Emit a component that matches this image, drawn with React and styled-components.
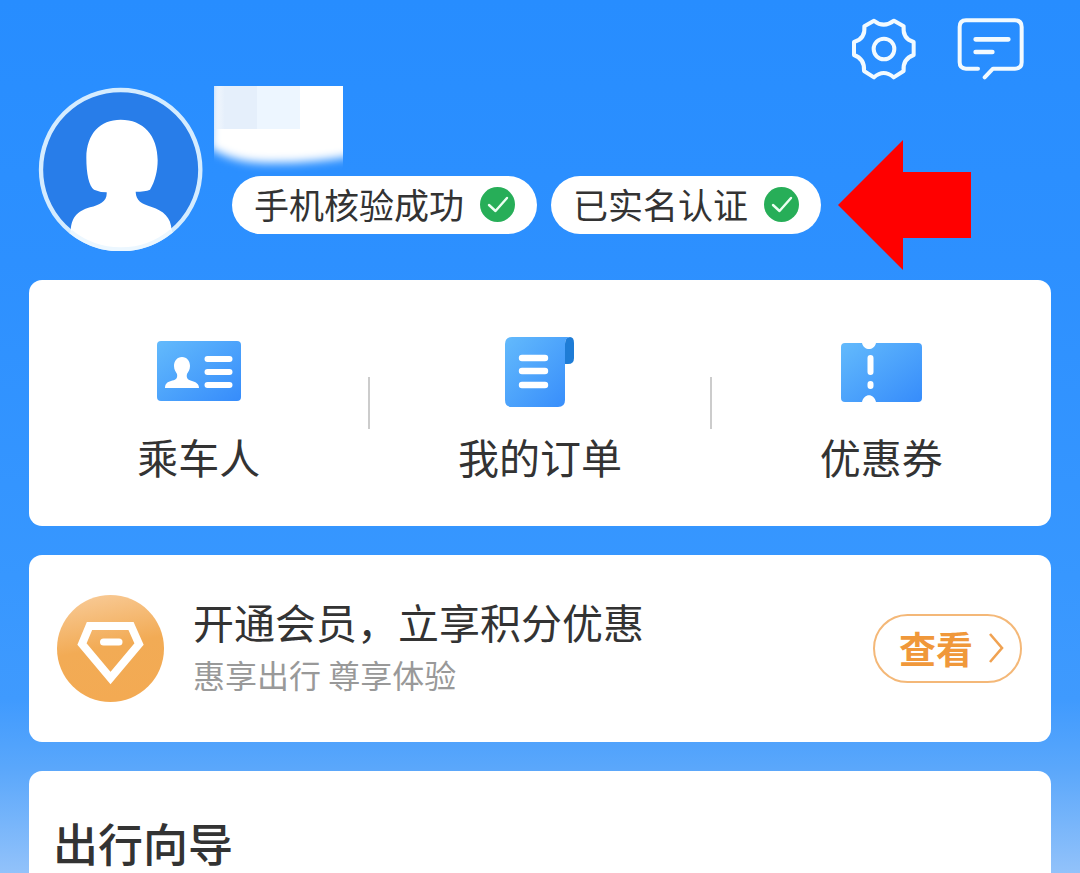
import React from "react";
import styled, { createGlobalStyle } from "styled-components";

const GlobalStyle = createGlobalStyle`
  * { box-sizing: border-box; }
  body {
    margin: 0;
    font-family: "Noto Sans CJK SC", "Noto Sans", sans-serif;
    color: #333;
  }
  button { font: inherit; color: inherit; background: none; border: 0; padding: 0; cursor: pointer; }
  h1, h2, p { margin: 0; font-weight: 400; }
  svg { display: block; }
`;

const Page = styled.div`
  min-height: 100vh;
  display: flex;
  flex-direction: column;
  padding: 0 29px;
  overflow-x: hidden;
  background: linear-gradient(#278dff 0%, #2d90ff 30%, #3797ff 66%, #3f9afe 80%, #5aa7fb 88%, #92c2fa 100%);
`;

const TopBar = styled.nav`
  display: flex;
  justify-content: flex-end;
  align-items: flex-start;
  gap: 41px;
  padding: 18px 27px 0 0;
  height: 86px;
`;

const IconButton = styled.button`
  display: block;
`;

const Profile = styled.section`
  display: flex;
  align-items: flex-start;
  gap: 11px;
  height: 194px;
  padding-left: 9px;
`;

const Identity = styled.div`
  display: flex;
  flex-direction: column;
`;

const Badges = styled.div`
  position: relative;
  display: flex;
  gap: 14px;
  margin-left: 18px;
`;

const Badge = styled.button`
  display: flex;
  align-items: center;
  gap: 16px;
  height: 58px;
  padding: 0 22px 2px;
  border-radius: 29px;
  background: #fff;
  font-size: 35px;
  line-height: 56px;
  white-space: nowrap;
`;

const Pointer = styled.svg`
  position: absolute;
  left: 100%;
  top: 50%;
  margin-left: 17px;
  transform: translateY(-50%);
`;

const Card = styled.section`
  background: #fff;
  border-radius: 13px;
`;

const Shortcuts = styled(Card)`
  display: grid;
  grid-template-columns: 1fr auto 1fr auto 1fr;
  align-items: center;
  margin-bottom: 29px;
`;

const Divider = styled.span`
  width: 2px;
  height: 52px;
  background: #ccc;
`;

const Shortcut = styled.button`
  display: flex;
  flex-direction: column;
  align-items: center;
  gap: 24px;
  padding: 56px 0 46px;
  font-size: 41px;
  line-height: 48px;
`;

const Member = styled(Card)`
  display: flex;
  align-items: center;
  gap: 29px;
  padding: 40px 29px 40px 28px;
  margin-bottom: 29px;
`;

const MemberText = styled.div`
  flex: 1;
  white-space: nowrap;
`;

const MemberTitle = styled.h2`
  font-size: 41px;
  line-height: 52px;
`;

const MemberNote = styled.p`
  font-size: 32px;
  line-height: 55px;
  color: #999;
`;

const ViewButton = styled.button`
  display: flex;
  align-items: center;
  justify-content: center;
  gap: 15px;
  width: 149px;
  height: 69px;
  border: 2px solid #f4b878;
  border-radius: 35px;
  padding: 0 0 2px 8px;
  color: #f0983a;
  font-size: 37px;
  font-weight: 700;
`;

const Guide = styled(Card)`
  flex: 1;
  border-radius: 13px 13px 0 0;
  padding: 48px 24px 0;
`;

const GuideTitle = styled.h2`
  font-size: 45px;
  line-height: 48px;
  font-weight: 500;
`;

const Gear = () => (
  <svg width="64" height="62" viewBox="35 55 192 186" fill="none" stroke="#f2faff" strokeWidth="12" strokeLinejoin="round">
    <path d="M101 63Q130 87 161 63L190 80Q186 118 220 127V166Q186 178 190 214L160 233Q130 207 101 233L71 214Q74 178 41 166V127Q76 118 72 80Z" />
    <circle cx="131" cy="148" r="31" />
  </svg>
);

const Message = () => (
  <svg width="67" height="62" viewBox="351 55 201 186" fill="none" stroke="#f2faff" strokeWidth="12" strokeLinecap="round">
    <path d="M414 207H378Q359 207 359 188V82Q359 62 378 62H525Q545 62 545 82V188Q545 207 525 207H459L434 233" strokeLinejoin="round" />
    <path d="M407 119H505M407 157H457" strokeWidth="14" />
  </svg>
);

const Avatar = () => (
  <svg width="165" height="165" viewBox="54 47 495 495" role="img" aria-label="头像">
    <defs>
      <clipPath id="face"><circle cx="302" cy="298" r="242" /></clipPath>
    </defs>
    <circle cx="302" cy="298" r="240" fill="#287de9" />
    <circle cx="302" cy="298" r="239" fill="none" stroke="#d5ecff" strokeWidth="13" />
    <path clipPath="url(#face)" fill="#fff" d="M302 148C240 148 200 190 199 262C199 310 207 347 222 358Q240 366 260 366C262 392 240 403 210 411C172 423 152 440 152 490V560H455V480C453 440 430 422 395 410C365 400 348 392 347 364Q375 364 390 358C405 335 413 300 413 270C413 195 370 148 302 148Z" />
    <path d="M152 484A238 238 0 0 0 455 481" fill="none" stroke="#ecf7ff" strokeWidth="12" />
  </svg>
);

/* The user name is covered by a soft-edged white patch. */
const HiddenName = () => (
  <svg width="129" height="90" viewBox="0 0 129 90" aria-hidden="true">
    <defs>
      <filter id="soft" x="-20%" y="-20%" width="140%" height="140%"><feGaussianBlur stdDeviation="5" /></filter>
      <clipPath id="patch"><rect width="129" height="90" /></clipPath>
      <linearGradient id="edge">
        <stop offset="0" stopColor="#e5effb" stopOpacity="0.300" />
        <stop offset="0.250" stopColor="#e5effb" />
      </linearGradient>
    </defs>
    <g clipPath="url(#patch)">
      <path filter="url(#soft)" fill="#fff" d="M-2 -20H150V68Q100 78 50 77Q18 76 -4 62Z" />
      <path fill="url(#edge)" d="M0 0H43V43H0Z" />
      <path fill="#edf6ff" d="M43 0H86V43H43Z" />
    </g>
  </svg>
);

const Check = () => (
  <svg width="35" height="35" viewBox="0 0 35 35" fill="none">
    <circle cx="17.5" cy="17.5" r="17.5" fill="#27ae58" />
    <path d="M9 18L15.500 24L27 11" stroke="#ecfff2" strokeWidth="2.400" strokeLinecap="round" strokeLinejoin="round" />
  </svg>
);

const BlueGradient = ({ id }) => (
  <linearGradient id={id} x1="0" y1="0" x2="1" y2="1">
    <stop offset="0" stopColor="#63bafc" />
    <stop offset="1" stopColor="#368cfb" />
  </linearGradient>
);

const PassengerIcon = () => (
  <svg width="84" height="72" viewBox="0 0 84 72">
    <defs><BlueGradient id="g1" /></defs>
    <rect y="5" width="84" height="60" rx="4" fill="url(#g1)" />
    <path fill="#fff" d="M25 21C20 21 17 25 17 30C17 34 19 36 20 38C21 43 18 44 14 45C10 46 8 48 8 52H42C42 48 39 46 35 45C31 44 29 42 30 38C31 36 33 34 33 30C33 25 30 21 25 21Z" />
    <path stroke="#fff" strokeWidth="6" strokeLinecap="round" d="M50.500 23H72.500M50.500 36H72.500M50.500 49H72.500" />
  </svg>
);

const OrderIcon = () => (
  <svg width="70" height="72" viewBox="0 0 70 72">
    <defs><BlueGradient id="g2" /></defs>
    <path fill="#1e7cd6" d="M60 8Q60 1 65 1Q69 1 69 7V22Q69 28 63 28H60Z" />
    <path fill="url(#g2)" d="M7 1H65Q60 2 60 8V64Q60 71 53 71H7Q0 71 0 64V8Q0 1 7 1Z" />
    <path stroke="#fff" strokeWidth="6.400" strokeLinecap="round" d="M17 22H40M17 35H40M17 49H40" />
  </svg>
);

const CouponIcon = () => (
  <svg width="82" height="72" viewBox="0 0 82 72">
    <defs><BlueGradient id="g3" /></defs>
    <path fill="url(#g3)" d="M5 7H22C24 15 34 15 36 7H78Q82 7 82 11V62Q82 66 78 66H36C34 57 24 57 22 66H5Q1 66 1 62V11Q1 7 5 7Z" />
    <path stroke="#fff" strokeWidth="6" strokeLinecap="round" d="M30.500 22V36M30.500 48V50" />
  </svg>
);

const Gem = () => (
  <svg width="107" height="107" viewBox="0 0 107 107" fill="none">
    <defs>
      <linearGradient id="gold" x1="0.300" y1="0" x2="0.500" y2="1">
        <stop offset="0" stopColor="#f8c994" />
        <stop offset="0.500" stopColor="#f2ab55" />
        <stop offset="1" stopColor="#f3aa53" />
      </linearGradient>
    </defs>
    <circle cx="53.500" cy="53.500" r="53.500" fill="url(#gold)" />
    <path stroke="#fff" strokeWidth="8" d="M32.500 31H74L82 49L53.500 83L25 49Z" />
    <path stroke="#fff" strokeWidth="7" strokeLinecap="round" d="M46.500 47H62" />
  </svg>
);

const Chevron = () => (
  <svg width="16" height="32" viewBox="0 0 16 32" fill="none" stroke="#f0a252" strokeWidth="2.600">
    <path d="M2 2L14 16L2 30" />
  </svg>
);

const shortcuts = [
  { label: "乘车人", Icon: PassengerIcon },
  { label: "我的订单", Icon: OrderIcon },
  { label: "优惠券", Icon: CouponIcon },
];

export default function App() {
  return (
    <Page>
      <GlobalStyle />
      <TopBar>
        <IconButton aria-label="设置"><Gear /></IconButton>
        <IconButton aria-label="消息"><Message /></IconButton>
      </TopBar>
      <Profile>
        <Avatar />
        <Identity>
          <HiddenName />
          <Badges>
            <Badge>手机核验成功<Check /></Badge>
            <Badge>已实名认证<Check /></Badge>
            <Pointer width="133" height="130" viewBox="0 0 133 130" aria-hidden="true">
              <path fill="#f00" d="M0 65L65 0V32H133V98H65V130Z" />
            </Pointer>
          </Badges>
        </Identity>
      </Profile>
      <Shortcuts>
        {shortcuts.map(({ label, Icon }, i) => (
          <React.Fragment key={label}>
            {i > 0 && <Divider />}
            <Shortcut><Icon />{label}</Shortcut>
          </React.Fragment>
        ))}
      </Shortcuts>
      <Member>
        <Gem />
        <MemberText>
          <MemberTitle>开通会员，立享积分优惠</MemberTitle>
          <MemberNote>惠享出行 尊享体验</MemberNote>
        </MemberText>
        <ViewButton>查看<Chevron /></ViewButton>
      </Member>
      <Guide>
        <GuideTitle>出行向导</GuideTitle>
      </Guide>
    </Page>
  );
}
